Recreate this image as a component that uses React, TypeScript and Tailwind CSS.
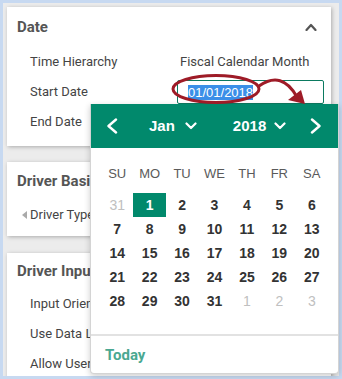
const weeks: number[][] = [
  [31, 1, 2, 3, 4, 5, 6],
  [7, 8, 9, 10, 11, 12, 13],
  [14, 15, 16, 17, 18, 19, 20],
  [21, 22, 23, 24, 25, 26, 27],
  [28, 29, 30, 31, 1, 2, 3],
]

const dayNames = ['SU', 'MO', 'TU', 'WE', 'TH', 'FR', 'SA']

function Caret({ dir, className }: { dir: 'left' | 'right' | 'up' | 'down'; className?: string }) {
  const horizontal = dir === 'left' || dir === 'right'
  const points =
    dir === 'left' ? '10,1.5 2.5,8 10,14.5' : dir === 'right' ? '2,1.5 9.5,8 2,14.5' : dir === 'up' ? '1.5,7 6,2 10.5,7' : '1.5,1.5 6,6 10.5,1.5'
  return (
    <svg
      className={className}
      width={12}
      height={horizontal ? 16 : 8}
      viewBox={horizontal ? '0 0 12 16' : '0 0 12 8'}
      fill="none"
      stroke="currentColor"
      strokeWidth={horizontal ? 2.4 : 2.2}
      strokeLinecap="round"
      strokeLinejoin="round"
    >
      <polyline points={points} />
    </svg>
  )
}

function Row({ label, children }: { label: string; children?: React.ReactNode }) {
  return (
    <div className="flex items-center h-[30px] pl-[23px]">
      <span className="w-[147px] shrink-0 text-[13px] text-[#444] whitespace-nowrap">{label}</span>
      {children}
    </div>
  )
}

function Calendar() {
  return (
    <div className="absolute left-[90px] top-[104px] w-[249px] h-[270px] bg-white border border-[#d4d4d4] border-t-0 rounded-b-[4px] shadow-[0_2px_6px_rgba(0,0,0,0.2)] font-['Liberation_Sans',Arial,sans-serif]">
      <div className="h-[44px] bg-[#01896c] flex items-center text-white">
        <Caret dir="left" className="ml-[15px]" />
        <span className="ml-[31px] text-[15px] font-bold">Jan</span>
        <Caret dir="down" className="ml-[10px]" />
        <span className="ml-[36px] text-[15px] font-bold">2018</span>
        <Caret dir="down" className="ml-[8px]" />
        <Caret dir="right" className="ml-[24px]" />
      </div>
      <div className="px-[10px] pt-[14px]">
        <div className="grid grid-cols-7 h-[24px] items-center text-center text-[13px] text-[#5a5a5a]">
          {dayNames.map((d) => (
            <span key={d}>{d}</span>
          ))}
        </div>
        <div className="mt-[7px]">
          {weeks.map((week, wi) => (
            <div key={wi} className="grid grid-cols-7 h-[24px] text-center text-[14px] font-bold">
              {week.map((day, di) => {
                const outside = (wi === 0 && di === 0) || (wi === 4 && di > 3)
                const selected = wi === 0 && di === 1
                return (
                  <span
                    key={di}
                    className={
                      selected
                        ? 'flex items-center justify-center bg-[#01896c] text-white'
                        : outside
                          ? 'flex items-center justify-center text-[#c0c0c0] font-normal'
                          : 'flex items-center justify-center text-[#333]'
                    }
                  >
                    {day}
                  </span>
                )
              })}
            </div>
          ))}
        </div>
      </div>
      <div className="mt-[21px] border-t-2 border-[#e2e2e2] h-[40px] flex items-center pl-[14px]">
        <span className="text-[15px] font-bold text-[#4aa891] font-['Roboto',sans-serif]">Today</span>
      </div>
    </div>
  )
}

export default function App() {
  return (
    <div className="relative w-[342px] h-[379px] bg-[#c7d9f1] p-[3px] overflow-hidden font-['Roboto','Liberation_Sans',sans-serif]">
      <div className="h-full bg-[#ececec] pl-[4px] pr-[8px] pt-[4px] overflow-hidden">
        <div className="bg-white shadow-[1px_1px_4px_rgba(0,0,0,0.28)] pb-[9px]">
          <div className="h-[40px] flex items-center justify-between pl-[10px] pr-[14px]">
            <span className="text-[15px] font-bold text-[#555]">Date</span>
            <Caret dir="up" className="text-[#555]" />
          </div>
          <Row label="Time Hierarchy">
            <span className="text-[13px] text-[#444] ml-[3px] whitespace-nowrap">Fiscal Calendar Month</span>
          </Row>
          <Row label="Start Date">
            <div className="w-[147px] h-[24px] border border-[#0b7a60] rounded-[2px] flex items-center pl-[10px]">
              <span className="bg-[#3b8fe8] text-white text-[13px] leading-[15px] font-['Liberation_Sans',Arial,sans-serif]">01/01/2018</span>
            </div>
          </Row>
          <Row label="End Date" />
        </div>

        <div className="mt-[16px] bg-white shadow-[1px_1px_4px_rgba(0,0,0,0.28)] pb-[7px]">
          <div className="h-[38px] flex items-center pl-[10px]">
            <span className="text-[15px] font-bold text-[#555] whitespace-nowrap">Driver Basis</span>
          </div>
          <div className="flex items-center h-[29px] pl-[15px]">
            <span className="w-0 h-0 border-y-[4px] border-y-transparent border-r-[5px] border-r-[#aaa] mr-[3px]" />
            <span className="text-[13px] text-[#444] whitespace-nowrap">Driver Type</span>
          </div>
        </div>

        <div className="mt-[17px] bg-white shadow-[1px_1px_4px_rgba(0,0,0,0.28)] h-[200px]">
          <div className="h-[36px] flex items-center pl-[10px]">
            <span className="text-[15px] font-bold text-[#555] whitespace-nowrap">Driver Input</span>
          </div>
          <Row label="Input Orientation" />
          <Row label="Use Data Lines" />
          <Row label="Allow User Input" />
        </div>
      </div>

      <Calendar />

      <svg className="absolute left-0 top-0 pointer-events-none" width="342" height="379" viewBox="0 0 342 379">
        <ellipse cx="216" cy="89" rx="43" ry="13.5" fill="none" stroke="#9e1b27" strokeWidth="3" />
        <path d="M259 86 Q 282 70 297 97" fill="none" stroke="#9e1b27" strokeWidth="3" />
        <polygon points="305,104 288,100 301,90" fill="#9e1b27" />
      </svg>
    </div>
  )
}
